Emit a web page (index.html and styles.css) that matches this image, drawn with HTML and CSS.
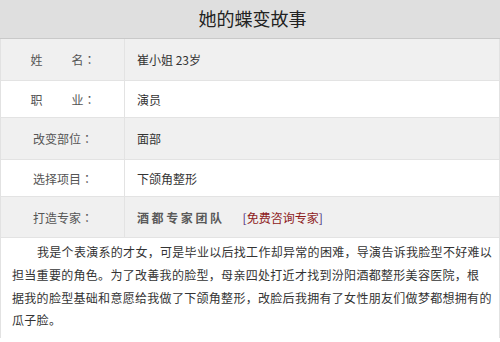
FILE: index.html
```html
<!DOCTYPE html>
<html lang="zh-CN">
<head>
<meta charset="utf-8">
<title>她的蝶变故事</title>
<link rel="stylesheet" href="styles.css">
</head>
<body>
<div class="story">
  <h1 class="story-title">她的蝶变故事</h1>
  <div class="info">
    <div class="row row-a">
      <div class="label"><span class="spread">姓</span>名<span class="colon">：</span></div>
      <div class="value">崔小姐 23岁</div>
    </div>
    <div class="row row-b">
      <div class="label"><span class="spread">职</span>业<span class="colon">：</span></div>
      <div class="value">演员</div>
    </div>
    <div class="row row-a">
      <div class="label">改变部位<span class="colon">：</span></div>
      <div class="value">面部</div>
    </div>
    <div class="row row-b">
      <div class="label">选择项目<span class="colon">：</span></div>
      <div class="value">下颌角整形</div>
    </div>
    <div class="row row-c">
      <div class="label">打造专家<span class="colon">：</span></div>
      <div class="value"><span class="team">酒都专家团队</span><a class="consult" href="#"><span class="br">[</span>免费咨询专家<span class="br">]</span></a></div>
    </div>
  </div>
  <p class="story-text">我是个表演系的才女，可是毕业以后找工作却异常的困难，导演告诉我脸型不好难以担当重要的角色。为了改善我的脸型，母亲四处打近才找到汾阳酒都整形美容医院，根<br>据我的脸型基础和意愿给我做了下颌角整形，改脸后我拥有了女性朋友们做梦都想拥有的瓜子脸。</p>
</div>
</body>
</html>
```
FILE: styles.css
```css
* { box-sizing: border-box; }
html, body {
  margin: 0;
  padding: 0;
  background: #fff;
}
body {
  font-family: "Noto Sans CJK SC", "Liberation Sans", sans-serif;
  font-size: 12px;
  color: #333;
}
.story {
  width: 500px;
  border-left: 1px solid #e2e2e2;
  border-right: 1px solid #e2e2e2;
}
.story-title {
  margin: 0 -1px;
  height: 39px;
  line-height: 37px;
  background: #dfdfdf;
  border-bottom: 1px solid #c9c9c9;
  text-align: center;
  font-size: 18px;
  font-weight: normal;
  color: #222;
  padding-left: 5px;
}
.row {
  display: grid;
  grid-template-columns: 124px 1fr;
  border-bottom: 1px solid #e3e3e3;
  align-items: center;
}
.row-a { height: 42px; background: #f0f0f0; }
.row-b { height: 37px; background: #fff; }
.row-c { height: 41px; background: #f0f0f0; }
.label {
  height: 100%;
  display: flex;
  align-items: center;
  justify-content: center;
  border-right: 1px solid #e3e3e3;
  color: #555;
  padding-left: 1px;
}
.colon {
  font-family: "Noto Sans CJK TC", "Noto Sans CJK SC", sans-serif;
}
.spread { margin-right: 29px; }
.value {
  padding-left: 12px;
  color: #333;
}
.team {
  color: #5a5a5a;
  font-weight: bold;
  letter-spacing: 2.6px;
}
.consult {
  margin-left: 18px;
  color: #8e1b1b;
  text-decoration: none;
}
.consult .br { color: #4a2a78; }
.story-text {
  margin: 0;
  padding: 3px 6px 6px 11px;
  line-height: 22.8px;
  letter-spacing: 0.3px;
  text-indent: 25px;
  color: #333;
}
```
